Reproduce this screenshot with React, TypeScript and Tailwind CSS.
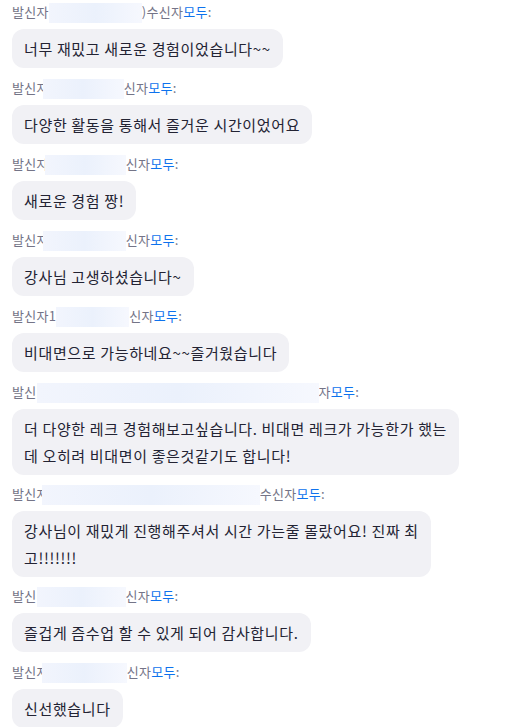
const messages = [
  { pre: "발신자", ml: "ml-0", w: "w-[93px]", suf: ")수신자", lines: ["너무 재밌고 새로운 경험이었습니다~~"] },
  { pre: "발신자", ml: "-ml-[6px]", w: "w-[81px]", suf: "신자", lines: ["다양한 활동을 통해서 즐거운 시간이었어요"] },
  { pre: "발신자", ml: "-ml-[4px]", w: "w-[81px]", suf: "신자", lines: ["새로운 경험 짱!"] },
  { pre: "발신자", ml: "-ml-[6px]", w: "w-[83px]", suf: "신자", lines: ["강사님 고생하셨습니다~"] },
  { pre: "발신자1", ml: "ml-0", w: "w-[73px]", suf: "신자", lines: ["비대면으로 가능하네요~~즐거웠습니다"] },
  {
    pre: "발신", ml: "ml-0", w: "w-[282px]", suf: "자",
    lines: ["더 다양한 레크 경험해보고싶습니다. 비대면 레크가 가능한가 했는", "데 오히려 비대면이 좋은것같기도 합니다!"],
  },
  {
    pre: "발신자", ml: "-ml-[7px]", w: "w-[218px]", suf: "수신자",
    lines: ["강사님이 재밌게 진행해주셔서 시간 가는줄 몰랐어요! 진짜 최", "고!!!!!!!"],
  },
  { pre: "발신", ml: "ml-0", w: "w-[89px]", suf: "신자", lines: ["즐겁게 즘수업 할 수 있게 되어 감사합니다."] },
  { pre: "발신자", ml: "-ml-[7px]", w: "w-[85px]", suf: "신자", lines: ["신선했습니다"] },
]

const App = () => {
  return (
    <div
      className="w-[530px] h-[727px] overflow-hidden bg-white px-[12px] pt-[2px]"
      style={{ fontFamily: '"Noto Sans CJK KR", "Noto Sans", sans-serif' }}
    >
      {messages.map((m, i) => (
        <div key={i} className={m.lines.length > 1 ? "mb-[9px]" : "mb-[10px]"}>
          {/* HEADER */}
          <div className="h-[20px] leading-[20px] text-[13px] tracking-[0.3px] text-[#747487] whitespace-nowrap">
            {m.pre}
            <span
              className={`inline-block align-middle h-[20px] ${m.w} ${m.ml} bg-gradient-to-r from-[#f2f5fd] via-[#ebf1fc] to-[#f6f8fe] blur-[0.5px]`}
            />
            {m.suf}
            <span className="text-[#0e72ed]">모두</span>:
          </div>

          {/* BUBBLE */}
          <div className="mt-[7px] inline-block whitespace-nowrap rounded-[12px] bg-[#f1f1f5] px-[12px] py-[6px] text-[15px] tracking-[0.65px] leading-[27px] text-[#232333]">
            {m.lines.map((l, j) => (
              <div key={j}>{l}</div>
            ))}
          </div>
        </div>
      ))}
    </div>
  )
}

export default App
